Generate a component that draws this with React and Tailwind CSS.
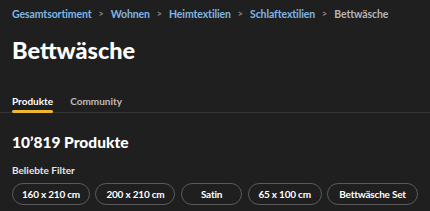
export default function App() {
  const crumbs = ["Gesamtsortiment", "Wohnen", "Heimtextilien", "Schlaftextilien"];
  const chips = [
    { t: "160 x 210 cm", w: "w-[79px]" },
    { t: "200 x 210 cm", w: "w-[81px]" },
    { t: "Satin", w: "w-[62px]" },
    { t: "65 x 100 cm", w: "w-[75px]" },
    { t: "Bettwäsche Set", w: "w-[92px]" },
  ];
  return (
    <div className="w-[430px] h-[211px] bg-[#1f1f1f] text-white overflow-hidden" style={{ fontFamily: "Lato, 'Noto Sans', sans-serif" }}>
      <div className="px-3 pt-[7px] flex items-center text-[10.5px] font-bold leading-[14px] tracking-[-0.1px]">
        {crumbs.map((c) => (
          <span key={c} className="flex items-center">
            <span className="text-[#7fb6e3]">{c}</span>
            <span className="text-[#8a8a8a] mx-[7px] text-[9px]">&gt;</span>
          </span>
        ))}
        <span className="text-[#b5b5b5]">Bettwäsche</span>
      </div>
      <h1 className="px-3 mt-[14px] text-[23.5px] font-black leading-[30px]">Bettwäsche</h1>
      <div className="mt-[29px] border-b border-[#353535] flex px-3 gap-[17px] text-[10px] font-bold leading-[14px]">
        <div className="relative pb-[4px]">
          <span className="text-white">Produkte</span>
          <div className="absolute left-0 right-0 bottom-[-1px] h-[3px] bg-[#f0b731] rounded-sm"></div>
        </div>
        <div className="pb-[4px] text-[#bdbdbd]">Community</div>
      </div>
      <div className="px-3 mt-[18px] text-[15.5px] font-black leading-[22px]">10’819 Produkte</div>
      <div className="px-3 mt-[10px] text-[10px] font-bold leading-[14px] text-[#e6e6e6]">Beliebte Filter</div>
      <div className="px-3 mt-[6px] flex gap-[5.5px]">
        {chips.map((c) => (
          <div key={c.t} className={`${c.w} h-[22px] flex items-center justify-center rounded-full border-[1.5px] border-[#5a5a5a] text-[10px] tracking-[-0.2px] font-bold whitespace-nowrap`}>
            {c.t}
          </div>
        ))}
      </div>
    </div>
  );
}
